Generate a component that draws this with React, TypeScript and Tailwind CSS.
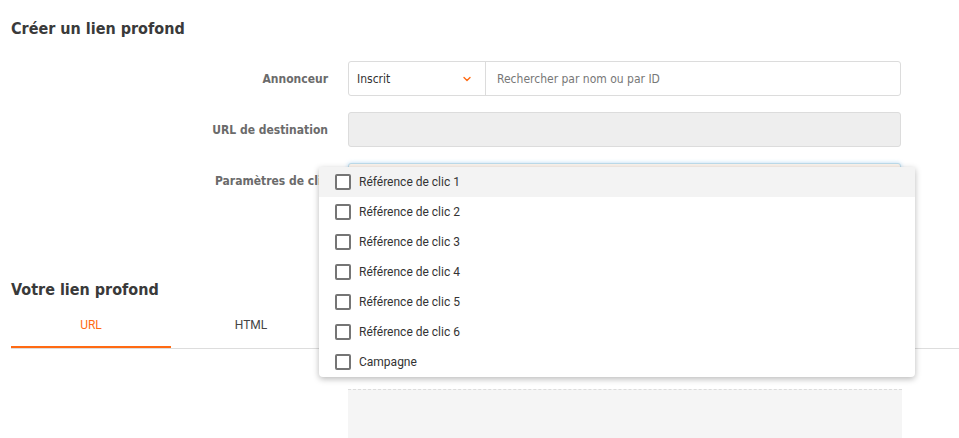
import { ChevronDown } from "lucide-react";

const labelFont = "font-['DejaVu_Sans_Condensed','DejaVu_Sans',sans-serif]";
const menuFont = "font-['Roboto','Noto_Sans',sans-serif]";

const clickParams = [
  "Référence de clic 1",
  "Référence de clic 2",
  "Référence de clic 3",
  "Référence de clic 4",
  "Référence de clic 5",
  "Référence de clic 6",
  "Campagne",
];

function FieldRow({ label, children }: { label: string; children: React.ReactNode }) {
  return (
    <div className="flex items-center gap-[20px]">
      <div className="w-[317px] shrink-0 text-right text-[12px] font-bold text-[#6b6b6b]">{label}</div>
      <div className="w-[553px]">{children}</div>
    </div>
  );
}

function ParamsMenu() {
  return (
    <div
      className={`absolute left-[319px] top-[167px] w-[596px] rounded-b-[4px] bg-white shadow-[0_2px_6px_rgba(0,0,0,0.28)] ${menuFont}`}
    >
      {clickParams.map((name, i) => (
        <div
          key={name}
          className={`flex h-[30px] items-center pl-[16px] text-[12px] text-[#333] ${i === 0 ? "bg-[#f3f3f3]" : ""}`}
        >
          <span className="mr-[8px] h-[16px] w-[16px] rounded-[2px] border-2 border-[#757575] bg-white" />
          {name}
        </div>
      ))}
    </div>
  );
}

export default function App() {
  return (
    <div className={`relative h-[438px] w-[959px] overflow-hidden bg-white pl-[11px] pt-[19px] ${labelFont}`}>
      <h2 className="text-[16px] font-bold leading-[20px] text-[#3a3a3a]">Créer un lien profond</h2>

      <div className="mt-[22px] flex flex-col gap-[16px]">
        <FieldRow label="Annonceur">
          <div className="flex h-[35px] rounded-[3px] border border-[#dcdcdc] bg-white text-[12px]">
            <div className="flex w-[137px] items-center justify-between border-r border-[#dcdcdc] pl-[8px] pr-[12px] text-[#333]">
              Inscrit
              <ChevronDown className="h-[12px] w-[12px] text-[#ff6a13]" strokeWidth={2.75} />
            </div>
            <div className="flex items-center pl-[11px] text-[#777]">Rechercher par nom ou par ID</div>
          </div>
        </FieldRow>
        <FieldRow label="URL de destination">
          <div className="h-[35px] rounded-[3px] border border-[#dcdcdc] bg-[#eeeeee]" />
        </FieldRow>
        <FieldRow label="Paramètres de clic">
          <div className="h-[35px] rounded-[3px] border border-[#bcdbea] bg-[#fbf3ec] shadow-[0_0_4px_rgba(102,175,233,0.45)]" />
        </FieldRow>
      </div>

      <h2 className="mt-[82px] text-[16px] font-bold leading-[20px] text-[#3a3a3a]">Votre lien profond</h2>

      <div className={`mt-[9px] flex border-b border-[#dddddd] text-[12px] ${menuFont}`}>
        <div className="flex h-[39px] w-[160px] items-start justify-center border-b-2 border-[#ff6a13] pt-[7px] text-[#ff6a13]">
          URL
        </div>
        <div className="flex h-[39px] w-[160px] items-start justify-center pt-[7px] text-[#444]">HTML</div>
      </div>

      <div className="ml-[337px] mt-[40px] h-[60px] w-[554px] border-t border-dashed border-[#dcdcdc] bg-[#f5f5f5]" />

      <ParamsMenu />
    </div>
  );
}
